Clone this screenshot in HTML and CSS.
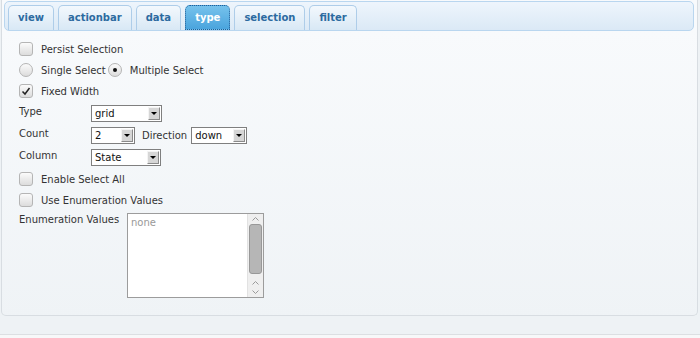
FILE: index.html
```html
<!DOCTYPE html>
<html lang="en">
<head>
  <meta charset="UTF-8">
  <title>Selection Settings</title>
  <link rel="stylesheet" href="styles.css">
</head>
<body>
  <div class="panel">
    <ul class="tabs">
      <li class="tab">view</li>
      <li class="tab">actionbar</li>
      <li class="tab">data</li>
      <li class="tab active">type</li>
      <li class="tab">selection</li>
      <li class="tab">filter</li>
    </ul>

    <div class="pane">
      <label class="check"><span class="box"></span>Persist Selection</label>

      <div class="check">
        <span class="radio"></span>Single Select
        <span class="radio on second"></span>Multiple Select
      </div>

      <label class="check">
        <span class="box">
          <svg width="12" height="12" viewBox="0 0 12 12"><path d="M2.5 6.5 L5 9 L9.5 3" fill="none" stroke="#222" stroke-width="1.5"/></svg>
        </span>Fixed Width
      </label>

      <div class="field">
        <span class="field-label">Type</span>
        <span class="combo">
          <select class="w-type"><option>grid</option></select>
          <span class="combo-btn"></span>
        </span>
      </div>

      <div class="field">
        <span class="field-label">Count</span>
        <span class="combo">
          <select class="w-count"><option>2</option></select>
          <span class="combo-btn"></span>
        </span>
        <span class="inline-label">Direction</span>
        <span class="combo">
          <select class="w-dir"><option>down</option></select>
          <span class="combo-btn"></span>
        </span>
      </div>

      <div class="field">
        <span class="field-label">Column</span>
        <span class="combo">
          <select class="w-col"><option>State</option></select>
          <span class="combo-btn"></span>
        </span>
      </div>

      <label class="check after-fields"><span class="box"></span>Enable Select All</label>
      <label class="check before-enum"><span class="box"></span>Use Enumeration Values</label>

      <div class="field">
        <span class="field-label wide">Enumeration Values</span>
        <div class="enum-box">
          <span class="placeholder">none</span>
          <div class="scrollbar">
            <span class="arrow"><svg width="7" height="4" viewBox="0 0 7 4"><polyline points="0.5,3.5 3.5,0.5 6.5,3.5" fill="none" stroke="#9a9a9a"/></svg></span>
            <span class="thumb"></span>
            <span class="arrow"><svg width="7" height="4" viewBox="0 0 7 4"><polyline points="0.5,3.5 3.5,0.5 6.5,3.5" fill="none" stroke="#9a9a9a"/></svg></span>
            <span class="arrow"><svg width="7" height="4" viewBox="0 0 7 4"><polyline points="0.5,0.5 3.5,3.5 6.5,0.5" fill="none" stroke="#9a9a9a"/></svg></span>
          </div>
        </div>
      </div>
    </div>
  </div>

  <div class="footer"></div>
</body>
</html>
```

FILE: styles.css
```css
body {
  margin: 0;
  font-family: "DejaVu Sans", Verdana, sans-serif;
  font-size: 10px;
  color: #333;
  background-color: #eef2f5;
  height: 338px;
  overflow: hidden;
}

.panel {
  height: 316px;
  box-sizing: border-box;
  margin: 0 2px 0 1px;
  padding: 1px 3px 0 2px;
  border: 1px solid #d8dde2;
  border-top: 0;
  border-radius: 0 0 5px 5px;
  background: linear-gradient(#f8fafc 30px, #eff3f6 320px);
}

.tabs {
  list-style: none;
  margin: 0;
  padding: 3px 0 0 3px;
  height: 30px;
  box-sizing: border-box;
  display: flex;
  gap: 4px;
  border: 1px solid #b9d6ef;
  border-radius: 5px;
  background: linear-gradient(#eef5fc, #dbe9f6);
}

.tab {
  padding: 0 9px;
  line-height: 24px;
  border: 1px solid #aecde9;
  border-bottom: 0;
  border-radius: 5px 5px 0 0;
  background: linear-gradient(#f3f8fd, #d8e8f5);
  color: #2c6aa0;
  font-weight: bold;
}

.tab.active {
  line-height: 23px;
  border: 1px dotted #245f96;
  background: linear-gradient(#76c2ec, #4aa4dd);
  color: #fff;
}

.pane {
  padding: 11px 0 0 15px;
}

.check {
  display: flex;
  align-items: center;
  height: 14px;
  margin-bottom: 7px;
}

.box,
.radio {
  width: 14px;
  height: 14px;
  box-sizing: border-box;
  margin-right: 8px;
  border: 1px solid #b5b5b5;
  border-radius: 3px;
  background: linear-gradient(#fbfbfb, #dcdcdc);
  display: flex;
  align-items: center;
  justify-content: center;
}

.radio {
  border-radius: 50%;
}

.radio.second {
  margin-left: 2px;
}

.radio.on::after {
  content: "";
  width: 4px;
  height: 4px;
  border-radius: 50%;
  background-color: #111;
}

.after-fields {
  margin-top: 6px;
}

.before-enum {
  margin-bottom: 6px;
}

.field {
  display: flex;
  align-items: flex-start;
  margin-bottom: 5px;
}

.field-label {
  width: 72px;
  line-height: 13px;
  flex: none;
}

.field-label.wide {
  width: 108px;
}

.inline-label {
  line-height: 17px;
  margin: 0 4px 0 7px;
}

.combo {
  position: relative;
  display: inline-block;
}

.combo select {
  -webkit-appearance: none;
  appearance: none;
  display: block;
  height: 17px;
  box-sizing: border-box;
  padding: 0 0 0 3px;
  border: 1px solid #7f7f7f;
  border-radius: 0;
  background-color: #fff;
  font-family: inherit;
  font-size: 10px;
  color: #111;
}

.w-type { width: 71px; }
.w-count { width: 44px; }
.w-dir { width: 56px; }
.w-col { width: 70px; }

.combo-btn {
  position: absolute;
  top: 2px;
  right: 2px;
  width: 12px;
  height: 13px;
  box-sizing: border-box;
  border: 1px solid;
  border-color: #f4f4f4 #8a8a8a #8a8a8a #f4f4f4;
  background-color: #d6d6d6;
  pointer-events: none;
}

.combo-btn::after {
  content: "";
  position: absolute;
  left: 2px;
  top: 4px;
  border-left: 3px solid transparent;
  border-right: 3px solid transparent;
  border-top: 3px solid #000;
}

.enum-box {
  width: 137px;
  height: 85px;
  box-sizing: border-box;
  border: 1px solid #9c9c9c;
  background-color: #fff;
  display: flex;
}

.placeholder {
  flex: 1;
  padding: 3px 0 0 3px;
  color: #999;
}

.scrollbar {
  width: 15px;
  display: flex;
  flex-direction: column;
  align-items: center;
  border-left: 1px solid #e2e2e2;
  background-color: #efefef;
}

.arrow {
  height: 10px;
  display: flex;
  align-items: center;
  justify-content: center;
}

.scrollbar .arrow:first-child {
  height: 11px;
}

.thumb {
  width: 13px;
  height: 52px;
  box-sizing: border-box;
  margin-bottom: 4px;
  border: 1px solid #989898;
  border-radius: 3px;
  background-color: #b6b6b6;
}

.footer {
  margin-top: 18px;
  height: 4px;
  border-top: 1px solid #dcdfe2;
  background-color: #f7f8f9;
}
```
